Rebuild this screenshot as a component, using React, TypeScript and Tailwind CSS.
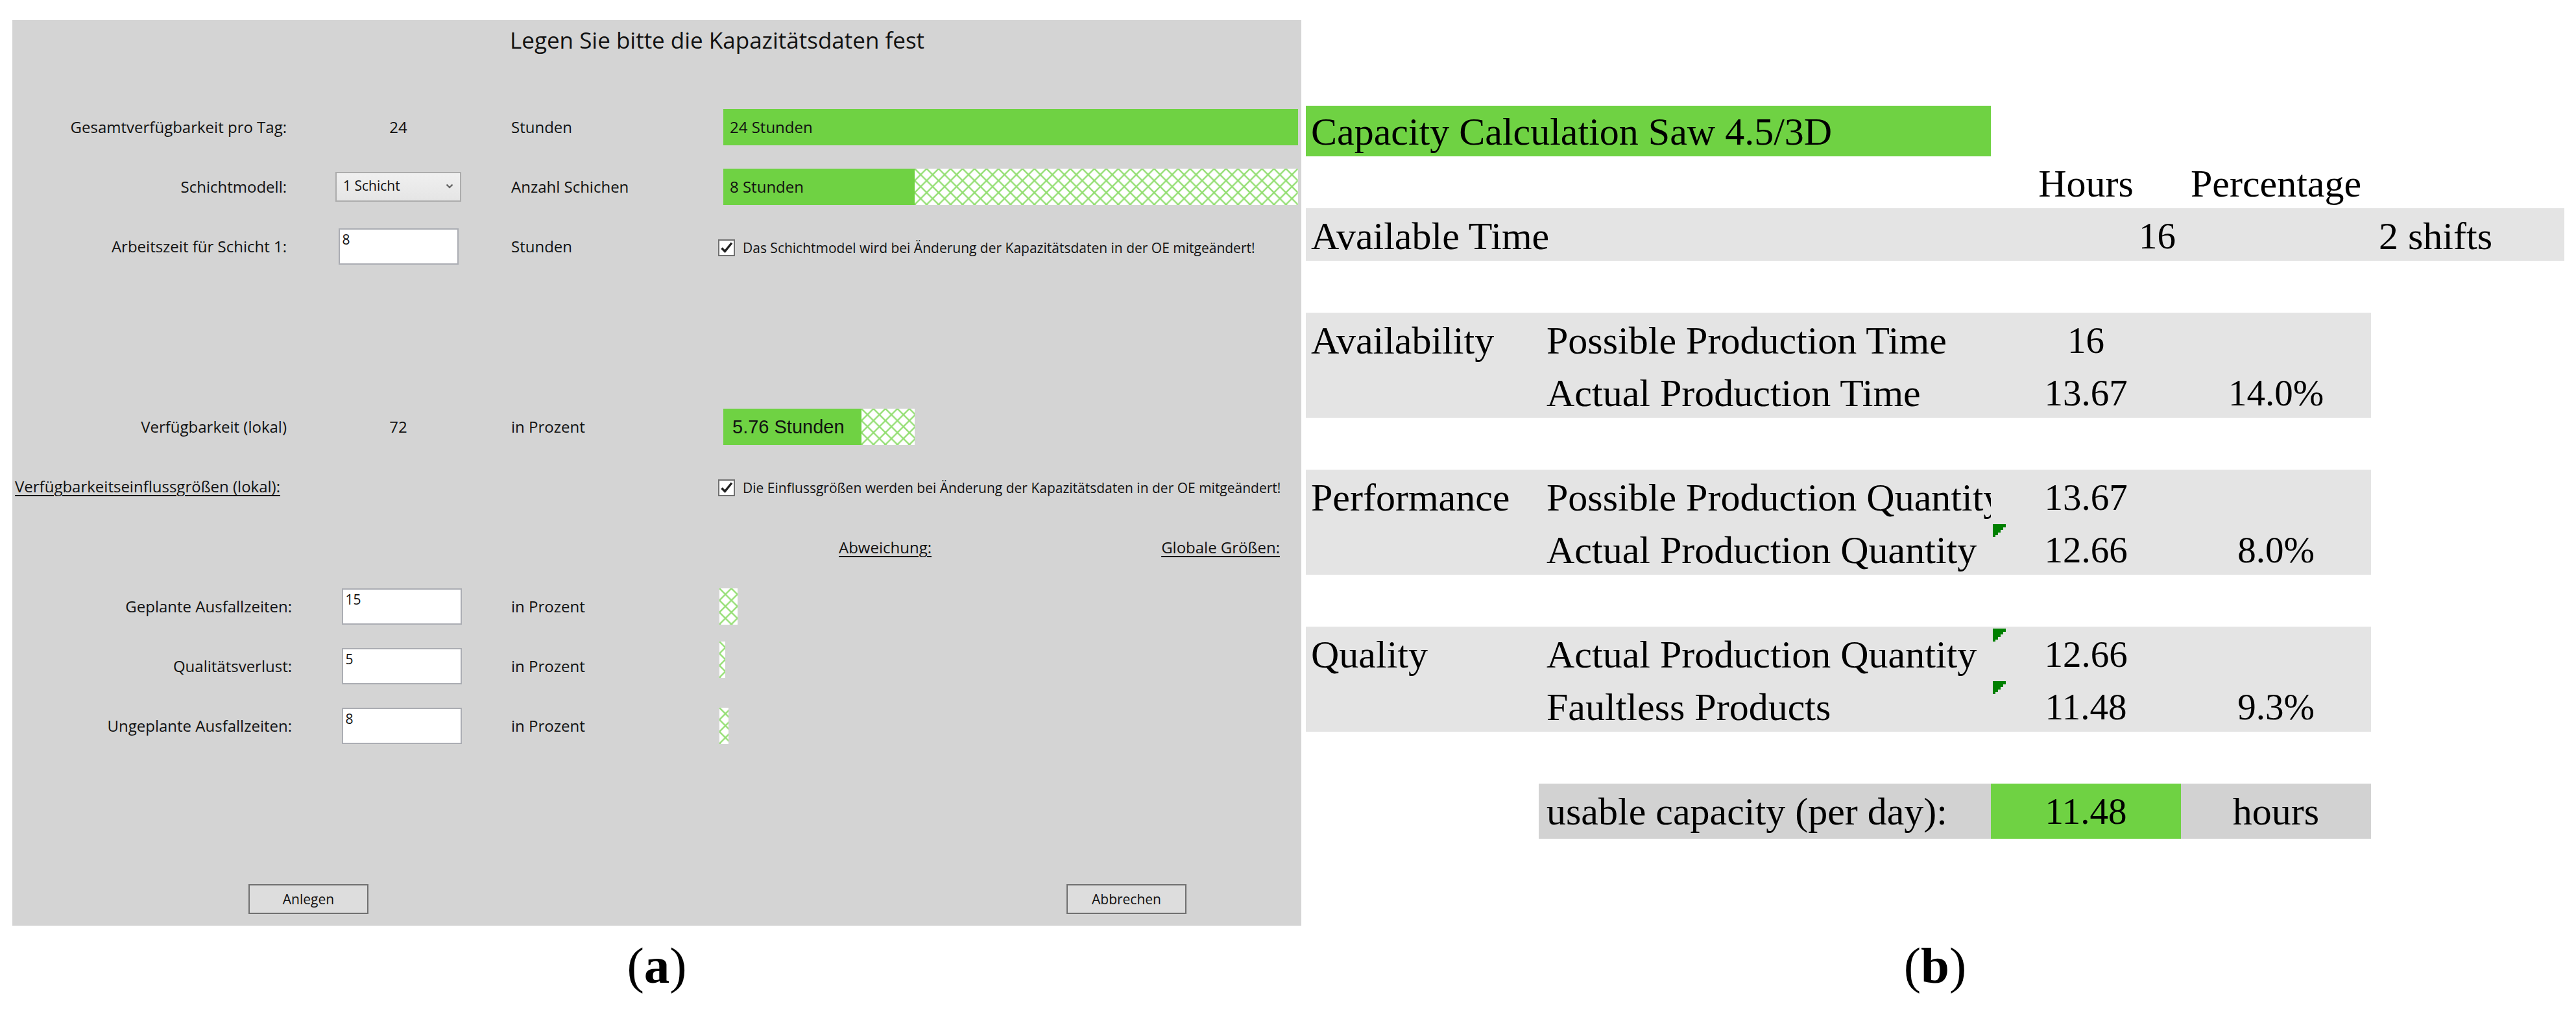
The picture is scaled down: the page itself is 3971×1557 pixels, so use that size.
import { useId } from 'react'
import type { ReactNode } from 'react'

const influences = [
  { id: 'planned', label: 'Geplante Ausfallzeiten:', value: '15', width: 28, cell: 'items-center' },
  { id: 'quality', label: 'Qualitätsverlust:', value: '5', width: 9, cell: 'items-start pt-2' },
  { id: 'unplanned', label: 'Ungeplante Ausfallzeiten:', value: '8', width: 14, cell: 'items-center' },
]

const groups = [
  {
    name: 'Availability',
    rows: [
      { label: 'Possible Production Time', hours: '16', percentage: '', flagged: false },
      { label: 'Actual Production Time', hours: '13.67', percentage: '14.0%', flagged: false },
    ],
  },
  {
    name: 'Performance',
    rows: [
      { label: 'Possible Production Quantity', hours: '13.67', percentage: '', flagged: false },
      { label: 'Actual Production Quantity', hours: '12.66', percentage: '8.0%', flagged: true },
    ],
  },
  {
    name: 'Quality',
    rows: [
      { label: 'Actual Production Quantity', hours: '12.66', percentage: '', flagged: true },
      { label: 'Faultless Products', hours: '11.48', percentage: '9.3%', flagged: true },
    ],
  },
]

const inputClass =
  'h-14 w-[185px] rounded-none border-2 border-[#abadb3] bg-white px-1 pt-0.5 pb-6 text-[21px] leading-7 outline-none'
const buttonClass = 'h-[46px] w-[185px] border-2 border-[#707070] bg-[#dddddd] text-[21px] leading-7'

// Cross-hatched remainder of a bar
function Hatch({ className = '', width }: { className?: string; width?: number }) {
  const id = useId()
  return (
    <svg className={`h-14 bg-white ${className}`} width={width} aria-hidden="true">
      <defs>
        <pattern id={id} width="18.46" height="18.46" patternUnits="userSpaceOnUse">
          <path d="M-2 -2L20.46 20.46M20.46 -2L-2 20.46" stroke="#6fd243" strokeWidth="2.4" strokeOpacity="0.75" />
        </pattern>
      </defs>
      <rect width="100%" height="100%" fill={`url(#${id})`} />
    </svg>
  )
}

function Row({ children }: { children: ReactNode }) {
  return <div className="grid h-[92px] grid-cols-[431fr_328fr_337fr_886fr] items-center">{children}</div>
}

function Unit({ children }: { children?: ReactNode }) {
  return <span className="pl-2.5">{children}</span>
}

function Check({ children }: { children: ReactNode }) {
  return (
    <label className="-ml-2 flex items-center gap-3 pt-1 text-[21px] whitespace-nowrap">
      <span className="grid shrink-0">
        <input
          type="checkbox"
          defaultChecked
          className="peer col-start-1 row-start-1 size-[26px] appearance-none border-2 border-[#707070] bg-white"
        />
        <svg
          viewBox="0 0 26 26"
          className="pointer-events-none col-start-1 row-start-1 hidden size-[26px] peer-checked:block"
          aria-hidden="true"
        >
          <path d="M5.5 13.5L10.5 18.5L21 5.5" fill="none" stroke="#212121" strokeWidth="3.4" />
        </svg>
      </span>
      {children}
    </label>
  )
}

function CapacityForm() {
  return (
    <form
      onSubmit={(e) => e.preventDefault()}
      className="bg-[#d4d4d4] pt-2 pr-[5px] pb-[18px] font-['Open_Sans','Noto_Sans',sans-serif] text-2xl text-[#111111]"
    >
      <h1 className="mb-[65px] pl-[767px] text-[35px] leading-[46px]">Legen Sie bitte die Kapazitätsdaten fest</h1>

      <Row>
        <span className="pr-2 text-right">Gesamtverfügbarkeit pro Tag:</span>
        <span className="text-center">24</span>
        <Unit>Stunden</Unit>
        <div className="flex h-14 items-center bg-[#6fd243] pl-2.5">24 Stunden</div>
      </Row>
      <Row>
        <label htmlFor="shift-model" className="pr-2 text-right">Schichtmodell:</label>
        <div className="relative mx-auto w-[194px]">
          <select
            id="shift-model"
            className="block h-[46px] w-full appearance-none rounded-none border-2 border-[#acacac] bg-linear-to-b from-[#f0f0f0] to-[#e5e5e5] pb-1 pl-2.5 text-[21px] leading-7"
          >
            <option>1 Schicht</option>
          </select>
          <svg viewBox="0 0 12 12" className="pointer-events-none absolute top-4 right-3 size-3" aria-hidden="true">
            <path d="M1.5 3.5L6 8L10.5 3.5" fill="none" stroke="#606060" strokeWidth="2.2" />
          </svg>
        </div>
        <Unit>Anzahl Schichen</Unit>
        <div className="flex bg-white">
          <div className="flex h-14 w-1/3 items-center bg-[#6fd243] pl-2.5">8 Stunden</div>
          <Hatch className="w-2/3" />
        </div>
      </Row>
      <Row>
        <label htmlFor="shift-hours" className="pr-2 text-right">Arbeitszeit für Schicht 1:</label>
        <input id="shift-hours" type="text" defaultValue="8" className={`mx-auto ${inputClass}`} />
        <Unit>Stunden</Unit>
        <Check>Das Schichtmodel wird bei Änderung der Kapazitätsdaten in der OE mitgeändert!</Check>
      </Row>

      <div className="mt-[186px]">
        <Row>
          <span className="pr-2 text-right">Verfügbarkeit (lokal)</span>
          <span className="text-center">72</span>
          <Unit>in Prozent</Unit>
          <div className="flex w-1/3">
            <div className="flex h-14 w-[72%] items-center bg-[#6fd243] pl-3.5 font-['Liberation_Sans',Arial,sans-serif] text-[29px] whitespace-nowrap">
              5.76 Stunden
            </div>
            <Hatch className="w-[28%]" />
          </div>
        </Row>
        <Row>
          <span className="pl-1 whitespace-nowrap underline decoration-2 underline-offset-4">Verfügbarkeitseinflussgrößen (lokal):</span>
          <span />
          <span />
          <Check>Die Einflussgrößen werden bei Änderung der Kapazitätsdaten in der OE mitgeändert!</Check>
        </Row>
        <Row>
          <div className="col-start-4 flex justify-between pt-1 pr-7 pl-[178px] underline decoration-2 underline-offset-4">
            <span>Abweichung:</span>
            <span>Globale Größen:</span>
          </div>
        </Row>
      </div>

      <div className="mt-px">
        {influences.map((item) => (
          <Row key={item.id}>
            <label htmlFor={item.id} className="text-right">{item.label}</label>
            <div className="flex justify-center pl-2.5">
              <input id={item.id} type="text" defaultValue={item.value} className={inputClass} />
            </div>
            <Unit>in Prozent</Unit>
            <div className={`-ml-1.5 flex self-stretch ${item.cell}`}>
              <Hatch width={item.width} />
            </div>
          </Row>
        ))}
      </div>

      <div className="mt-[198px] flex justify-between pr-[172px] pl-[364px]">
        <button type="submit" className={buttonClass}>Anlegen</button>
        <button type="button" className={buttonClass}>Abbrechen</button>
      </div>
    </form>
  )
}

function Flag() {
  return (
    <svg viewBox="0 0 20 20" className="absolute top-[3px] left-[3px] size-5" aria-hidden="true">
      <path d="M0 0H20V5H16V9H12V13H8V17H4V20H0Z" fill="#008000" />
    </svg>
  )
}

function SpacerRow() {
  return (
    <tr>
      <td colSpan={5} className="h-20" />
    </tr>
  )
}

function CapacityTable() {
  return (
    <table className="mt-[132px] w-full table-fixed border-collapse text-[60px] leading-[76px] whitespace-nowrap [&_td]:align-bottom [&_th]:align-bottom [&_th]:font-normal">
      <colgroup>
        <col className="w-[359px]" />
        <col className="w-[697px]" />
        <col className="w-[293px]" />
        <col className="w-[293px]" />
        <col className="w-[298px]" />
      </colgroup>
      <tbody>
        <tr>
          <th colSpan={2} className="h-[78px] bg-[#6fd243] pl-2 text-left">Capacity Calculation Saw 4.5/3D</th>
        </tr>
        <tr>
          <td colSpan={2} className="h-20" />
          <th className="text-center">Hours</th>
          <th>
            <div className="-mx-4 text-center">Percentage</div>
          </th>
        </tr>
        <tr className="bg-[#e4e4e4]">
          <th colSpan={2} className="h-[81px] pl-2 text-left">Available Time</th>
          <td colSpan={2} className="pl-[228px] text-left text-[57px]">16</td>
          <td className="pl-3">2 shifts</td>
        </tr>
        <SpacerRow />
      </tbody>
      {groups.map((group) => (
        <tbody key={group.name}>
          {group.rows.map((row, index) => (
            <tr key={row.label}>
              <th className="h-[81px] bg-[#e4e4e4] pl-2 text-left">{index === 0 && group.name}</th>
              <td className="overflow-hidden bg-[#e4e4e4] pl-3">{row.label}</td>
              <td className="relative bg-[#e4e4e4] text-center text-[57px]">
                {row.flagged && <Flag />}
                {row.hours}
              </td>
              <td className="bg-[#e4e4e4] text-center text-[57px]">{row.percentage}</td>
            </tr>
          ))}
          <SpacerRow />
        </tbody>
      ))}
      <tbody>
        <tr className="[&>td]:align-middle">
          <td />
          <td className="h-[85px] bg-[#d2d2d2] pl-3">usable capacity (per day):</td>
          <td className="bg-[#6fd243] text-center text-[57px]">11.48</td>
          <td className="bg-[#d2d2d2] text-center">hours</td>
        </tr>
      </tbody>
    </table>
  )
}

function Caption({ letter }: { letter: string }) {
  return (
    <figcaption className="mt-[22px] text-center text-[79px] leading-20">
      (<b>{letter}</b>)
    </figcaption>
  )
}

export default function App() {
  return (
    <main className="grid grid-cols-[1987fr_1940fr] gap-[7px] bg-white pt-[31px] pr-[18px] pb-7 pl-[19px] font-['Palatino_Linotype',Palatino,'Liberation_Serif',serif] text-black">
      <figure>
        <CapacityForm />
        <Caption letter="a" />
      </figure>
      <figure className="flex flex-col justify-between">
        <CapacityTable />
        <Caption letter="b" />
      </figure>
    </main>
  )
}
